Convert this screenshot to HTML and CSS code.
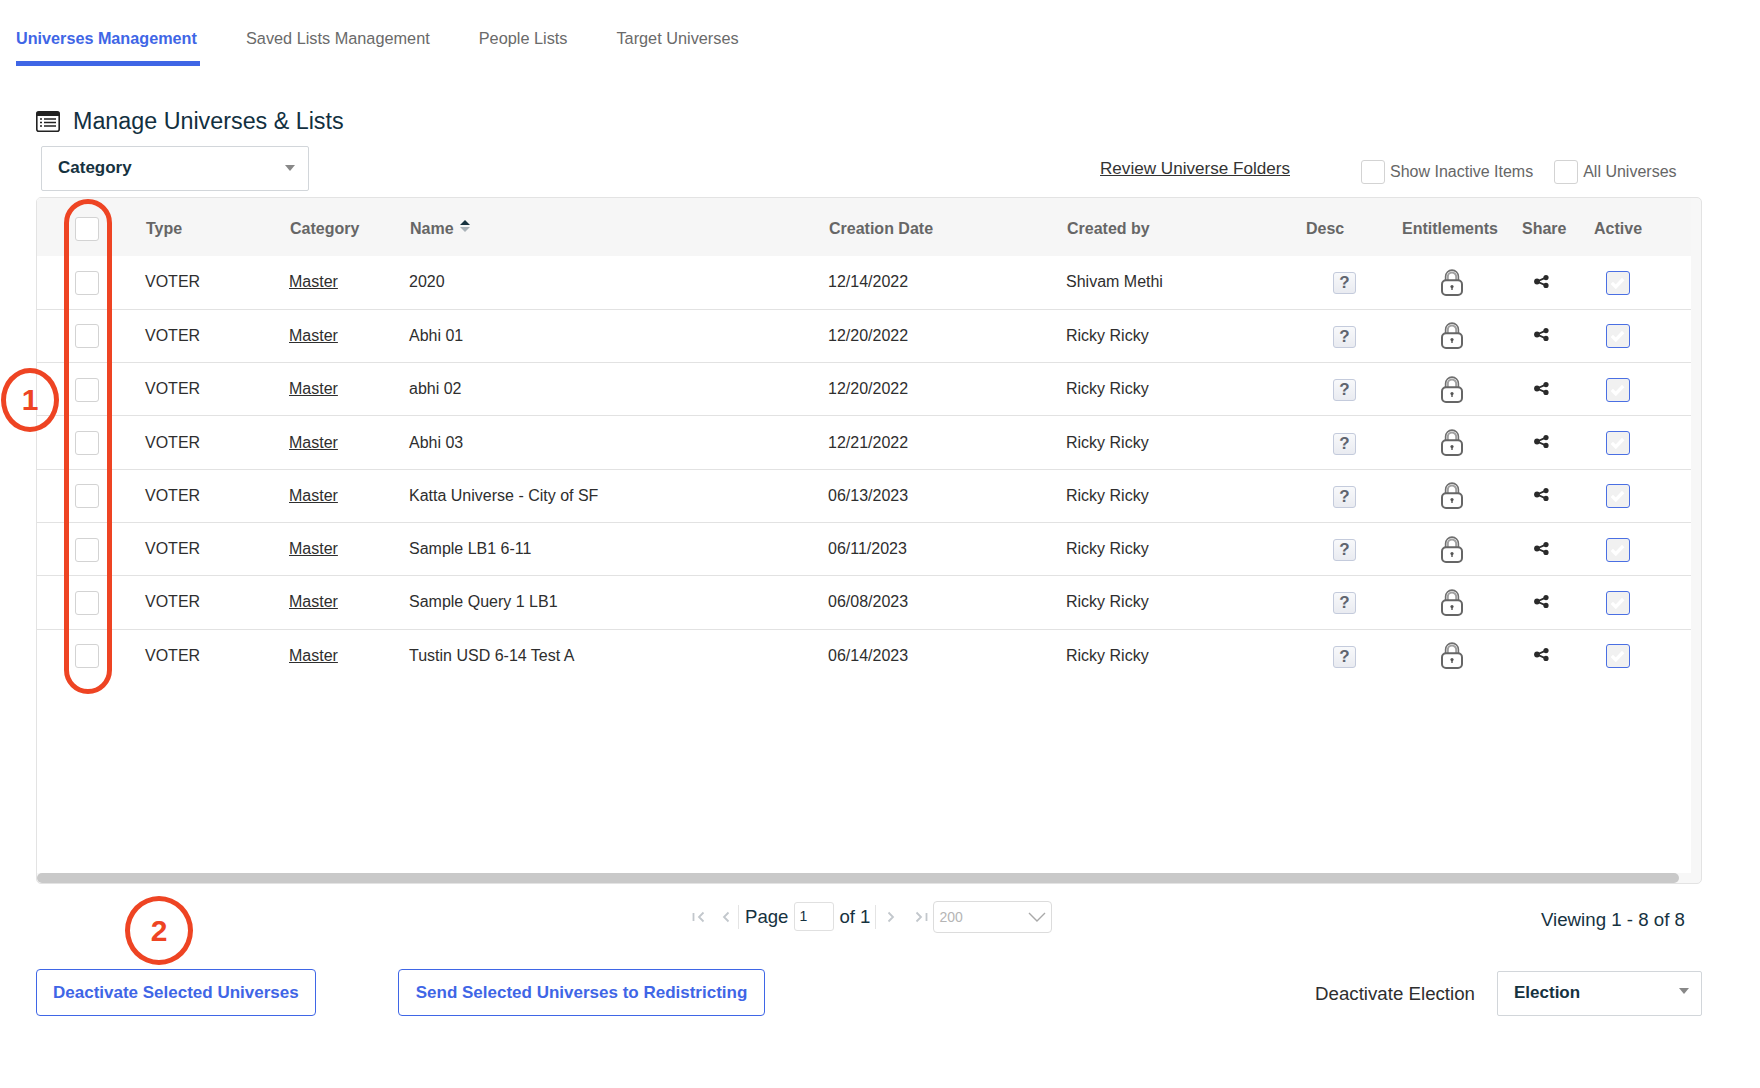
FILE: index.html
```html
<!DOCTYPE html>
<html lang="en">
<head>
  <meta charset="UTF-8" />
  <title>Universes Management</title>
  <link rel="stylesheet" href="styles.css">
</head>
<body>

  <!-- shared icons -->
  <svg class="icon-defs" width="0" height="0">
    <symbol id="lock" viewBox="0 0 22 27">
      <path d="M4.600 12V7.500a6.400 6.400 0 0 1 12.800 0V12" fill="none" stroke="#6f6f6f" stroke-width="1.600"/>
      <path d="M6.800 12V7.800a4.200 4.200 0 0 1 8.400 0V12" fill="none" stroke="#a0a0a0" stroke-width="2"/>
      <rect x="1" y="11.200" width="20" height="14.800" rx="4" fill="#fff" stroke="#666" stroke-width="2"/>
      <circle cx="11" cy="17.600" r="1.600" fill="#555"/>
      <rect x="10.300" y="18" width="1.400" height="3" fill="#555"/>
    </symbol>
    <symbol id="share" viewBox="0 0 15 13">
      <path d="M11.800 2.600 3 6.500l8.800 3.900" fill="none" stroke="#2a2a2a" stroke-width="1.700"/>
      <circle cx="3" cy="6.500" r="2.900" fill="#2a2a2a"/>
      <circle cx="12" cy="2.600" r="2.600" fill="#2a2a2a"/>
      <circle cx="12" cy="10.400" r="2.600" fill="#2a2a2a"/>
    </symbol>
    <symbol id="tick" viewBox="0 0 24 24">
      <path d="M5.500 12.500l4.500 4.500 8.500-9" fill="none" stroke="#fff" stroke-width="3.800"/>
    </symbol>
  </svg>

  <nav class="tabs">
    <a class="tab tab-active">Universes Management</a>
    <a class="tab">Saved Lists Management</a>
    <a class="tab">People Lists</a>
    <a class="tab">Target Universes</a>
  </nav>

  <main class="content">
    <div class="title-row">
      <svg class="title-icon" viewBox="0 0 24 21" width="24" height="21">
        <rect x="0.800" y="0.800" width="22.400" height="19.400" rx="2" fill="#fff" stroke="#222" stroke-width="1.600"/>
        <rect x="0.800" y="0.800" width="22.400" height="4.200" fill="#222"/>
        <path d="M4 8h2M4 11.500h2M4 15h2M8 8h12M8 11.500h12M8 15h12" stroke="#222" stroke-width="1.700"/>
      </svg>
      <h1>Manage Universes &amp; Lists</h1>
    </div>

    <div class="toolbar">
      <div class="select select-category">Category<span class="caret"></span></div>
      <a class="review-link">Review Universe Folders</a>
      <label class="check-label"><span class="checkbox"></span>Show Inactive Items</label>
      <label class="check-label"><span class="checkbox"></span>All Universes</label>
    </div>

    <div class="table-box">
      <div class="table-area">
        <table>
          <colgroup>
            <col class="c-check"><col class="c-type"><col class="c-category"><col class="c-name"><col class="c-date">
            <col class="c-by"><col class="c-desc"><col class="c-ent"><col class="c-share"><col class="c-active">
          </colgroup>
          <thead>
            <tr>
              <th><span class="checkbox row-check"></span></th>
              <th>Type</th>
              <th>Category</th>
              <th>Name <span class="sort"><i class="sort-up"></i><i class="sort-down"></i></span></th>
              <th>Creation Date</th>
              <th>Created by</th>
              <th>Desc</th>
              <th class="th-tight">Entitlements</th>
              <th class="th-tight">Share</th>
              <th class="th-tight">Active</th>
            </tr>
          </thead>
          <tbody>
            <tr>
              <td class="i-check"><span class="checkbox row-check"></span></td><td>VOTER</td><td><a class="master">Master</a></td><td>2020</td><td>12/14/2022</td><td>Shivam Methi</td>
              <td class="i-desc"><span class="help">?</span></td><td class="i-ent"><svg class="lock"><use href="#lock"/></svg></td><td class="i-share"><svg class="share"><use href="#share"/></svg></td><td class="i-active"><span class="active-box"><svg class="tick"><use href="#tick"/></svg></span></td>
            </tr>
            <tr>
              <td class="i-check"><span class="checkbox row-check"></span></td><td>VOTER</td><td><a class="master">Master</a></td><td>Abhi 01</td><td>12/20/2022</td><td>Ricky Ricky</td>
              <td class="i-desc"><span class="help">?</span></td><td class="i-ent"><svg class="lock"><use href="#lock"/></svg></td><td class="i-share"><svg class="share"><use href="#share"/></svg></td><td class="i-active"><span class="active-box"><svg class="tick"><use href="#tick"/></svg></span></td>
            </tr>
            <tr>
              <td class="i-check"><span class="checkbox row-check"></span></td><td>VOTER</td><td><a class="master">Master</a></td><td>abhi 02</td><td>12/20/2022</td><td>Ricky Ricky</td>
              <td class="i-desc"><span class="help">?</span></td><td class="i-ent"><svg class="lock"><use href="#lock"/></svg></td><td class="i-share"><svg class="share"><use href="#share"/></svg></td><td class="i-active"><span class="active-box"><svg class="tick"><use href="#tick"/></svg></span></td>
            </tr>
            <tr>
              <td class="i-check"><span class="checkbox row-check"></span></td><td>VOTER</td><td><a class="master">Master</a></td><td>Abhi 03</td><td>12/21/2022</td><td>Ricky Ricky</td>
              <td class="i-desc"><span class="help">?</span></td><td class="i-ent"><svg class="lock"><use href="#lock"/></svg></td><td class="i-share"><svg class="share"><use href="#share"/></svg></td><td class="i-active"><span class="active-box"><svg class="tick"><use href="#tick"/></svg></span></td>
            </tr>
            <tr>
              <td class="i-check"><span class="checkbox row-check"></span></td><td>VOTER</td><td><a class="master">Master</a></td><td>Katta Universe - City of SF</td><td>06/13/2023</td><td>Ricky Ricky</td>
              <td class="i-desc"><span class="help">?</span></td><td class="i-ent"><svg class="lock"><use href="#lock"/></svg></td><td class="i-share"><svg class="share"><use href="#share"/></svg></td><td class="i-active"><span class="active-box"><svg class="tick"><use href="#tick"/></svg></span></td>
            </tr>
            <tr>
              <td class="i-check"><span class="checkbox row-check"></span></td><td>VOTER</td><td><a class="master">Master</a></td><td>Sample LB1 6-11</td><td>06/11/2023</td><td>Ricky Ricky</td>
              <td class="i-desc"><span class="help">?</span></td><td class="i-ent"><svg class="lock"><use href="#lock"/></svg></td><td class="i-share"><svg class="share"><use href="#share"/></svg></td><td class="i-active"><span class="active-box"><svg class="tick"><use href="#tick"/></svg></span></td>
            </tr>
            <tr>
              <td class="i-check"><span class="checkbox row-check"></span></td><td>VOTER</td><td><a class="master">Master</a></td><td>Sample Query 1 LB1</td><td>06/08/2023</td><td>Ricky Ricky</td>
              <td class="i-desc"><span class="help">?</span></td><td class="i-ent"><svg class="lock"><use href="#lock"/></svg></td><td class="i-share"><svg class="share"><use href="#share"/></svg></td><td class="i-active"><span class="active-box"><svg class="tick"><use href="#tick"/></svg></span></td>
            </tr>
            <tr>
              <td class="i-check"><span class="checkbox row-check"></span></td><td>VOTER</td><td><a class="master">Master</a></td><td>Tustin USD 6-14 Test A</td><td>06/14/2023</td><td>Ricky Ricky</td>
              <td class="i-desc"><span class="help">?</span></td><td class="i-ent"><svg class="lock"><use href="#lock"/></svg></td><td class="i-share"><svg class="share"><use href="#share"/></svg></td><td class="i-active"><span class="active-box"><svg class="tick"><use href="#tick"/></svg></span></td>
            </tr>
          </tbody>
        </table>
      </div>
      <div class="scroll-track"><div class="scroll-thumb"></div></div>
    </div>

    <div class="pager-row">
      <div class="pager">
        <svg class="pg-icon" viewBox="0 0 14 12" width="14" height="12"><path d="M1.500 2v8M11.500 1.500 7 6l4.500 4.500" fill="none" stroke="#c2c7cc" stroke-width="1.800"/></svg>
        <svg class="pg-icon pg-prev" viewBox="0 0 10 12" width="10" height="12"><path d="M7.500 1.500 3 6l4.500 4.500" fill="none" stroke="#c2c7cc" stroke-width="1.800"/></svg>
        <span class="pg-sep"></span>
        <span class="pg-text">Page</span>
        <span class="pg-input">1</span>
        <span class="pg-text">of 1</span>
        <span class="pg-sep"></span>
        <svg class="pg-icon pg-next" viewBox="0 0 10 12" width="10" height="12"><path d="M2.500 1.500 7 6l-4.500 4.500" fill="none" stroke="#c2c7cc" stroke-width="1.800"/></svg>
        <svg class="pg-icon pg-last" viewBox="0 0 14 12" width="14" height="12"><path d="M2.500 1.500 7 6l-4.500 4.500M12.500 2v8" fill="none" stroke="#c2c7cc" stroke-width="1.800"/></svg>
        <div class="pg-size">200
          <svg viewBox="0 0 18 10" width="18" height="10"><path d="M1 1l8 8 8-8" fill="none" stroke="#a9a9a9" stroke-width="1.400"/></svg>
        </div>
      </div>
      <div class="viewing">Viewing 1 - 8 of 8</div>
    </div>

    <div class="actions">
      <button class="action-btn">Deactivate Selected Universes</button>
      <button class="action-btn">Send Selected Universes to Redistricting</button>
      <div class="deactivate-group">
        <span class="deactivate-label">Deactivate Election</span>
        <div class="select select-election">Election<span class="caret"></span></div>
      </div>
    </div>
  </main>

  <!-- callouts drawn over the screenshot -->
  <div class="mark-column"></div>
  <div class="mark-circle mark-one">1</div>
  <div class="mark-circle mark-two">2</div>

</body>
</html>
```

FILE: styles.css
```css
* {
  box-sizing: border-box;
}

body {
  margin: 0;
  height: 1088px;
  overflow: hidden;
  position: relative;
  background-color: #fff;
  font-family: "Liberation Sans", Arial, sans-serif;
  font-size: 16px;
  color: #2e2e2e;
}

.icon-defs {
  position: absolute;
}

/* tabs */
.tabs {
  display: flex;
  gap: 49px;
  padding-left: 16px;
  height: 66px;
}

.tab {
  padding-top: 28px;
  color: #6a6a6a;
  font-size: 16.3px;
  line-height: 20px;
}

.tab-active {
  width: 184px;
  margin-right: -3px;
  border-bottom: 5px solid #3f66e6;
  color: #3f66e6;
  font-size: 16.2px;
  font-weight: bold;
  white-space: nowrap;
}

/* page body */
.content {
  padding: 0 58px 0 36px;
}

.title-row {
  display: flex;
  align-items: center;
  gap: 13px;
  margin-top: 39px;
  height: 32px;
}

.title-row h1 {
  margin: 0;
  font-size: 23.3px;
  font-weight: normal;
  color: #12303f;
}

.toolbar {
  display: flex;
  align-items: center;
  height: 45px;
  margin-top: 9px;
  padding-left: 5px;
}

.select {
  position: relative;
  display: flex;
  align-items: center;
  border: 1px solid #d2d6da;
  border-radius: 2px;
  font-size: 17px;
  font-weight: bold;
  color: #16323f;
}

.select-category {
  width: 268px;
  height: 45px;
  padding: 0 0 1px 16px;
}

.caret {
  position: absolute;
  right: 13px;
  top: 18px;
  border-left: 5px solid transparent;
  border-right: 5px solid transparent;
  border-top: 6px solid #888;
}

.review-link {
  margin-left: 791px;
  color: #333;
  font-size: 17.1px;
  text-decoration: underline;
}

.checkbox {
  display: block;
  width: 24px;
  height: 24px;
  background-color: #fff;
  border: 1px solid #d3d3d3;
  border-radius: 3px;
}

.check-label {
  display: flex;
  align-items: center;
  gap: 5px;
  margin-left: 71px;
  margin-top: 7px;
  color: #666;
}

.check-label + .check-label {
  margin-left: 21px;
}

/* table */
.table-box {
  margin-top: 6px;
  height: 687px;
  border: 1px solid #e3e3e3;
  border-radius: 5px;
  background-color: #f7f7f7;
  display: flex;
  flex-direction: column;
  overflow: hidden;
}

.table-area {
  flex: 1;
  width: 1654px;
  background-color: #fff;
}

table {
  width: 1654px;
  table-layout: fixed;
  border-collapse: collapse;
}

.c-check { width: 108px; }
.c-type { width: 144px; }
.c-category { width: 120px; }
.c-name { width: 419px; }
.c-date { width: 238px; }
.c-by { width: 239px; }
.c-desc { width: 97px; }
.c-ent { width: 120px; }
.c-share { width: 72px; }
.c-active { width: 97px; }

thead tr {
  height: 58px;
  background-color: #f6f6f6;
}

th {
  padding: 3px 0 0 1px;
  text-align: left;
  color: #666;
  font-weight: bold;
}

th.th-tight {
  padding-left: 0;
}

tbody tr {
  height: 53.3px;
  border-bottom: 1px solid #e2e2e2;
}

tbody tr:last-child {
  border-bottom: none;
}

td {
  padding: 0;
}

.i-check {
  padding-top: 1px;
}

.row-check {
  margin-left: 38px;
}

th .row-check {
  margin-left: 37px;
}

.master {
  color: #2e2e2e;
  text-decoration: underline;
}

.sort {
  display: inline-block;
  vertical-align: 2px;
  width: 10px;
  margin-left: 2px;
}

.sort i {
  display: block;
  border-left: 5px solid transparent;
  border-right: 5px solid transparent;
}

.sort-up {
  border-bottom: 5px solid #16323f;
  margin-bottom: 2px;
}

.sort-down {
  border-top: 5px solid #a9b2b8;
}

.i-desc { padding: 2px 0 0 28px; }
.i-ent { padding-left: 39px; }
.i-share { padding-left: 12px; }
.i-active { padding: 1px 0 0 12px; }

.help {
  display: block;
  width: 23px;
  height: 22px;
  border: 1px solid #c4cbdc;
  border-radius: 3px;
  background: linear-gradient(#f8f9fb, #e9ebf1);
  color: #60656f;
  font-size: 17px;
  font-weight: bold;
  line-height: 20px;
  text-align: center;
}

.lock {
  display: block;
  width: 22px;
  height: 27px;
}

.share {
  display: block;
  width: 15px;
  height: 13px;
  margin-bottom: 2px;
}

.active-box {
  display: block;
  width: 24px;
  height: 24px;
  background-color: #f1f1f1;
  border: 1.5px solid #4a6fe3;
  border-radius: 3px;
}

.tick {
  display: block;
  width: 21px;
  height: 21px;
}

.scroll-track {
  height: 10px;
  flex: none;
}

.scroll-thumb {
  width: 1642px;
  height: 10px;
  background-color: #c9c9c9;
  border-radius: 5px;
}

/* pager */
.pager-row {
  display: flex;
  align-items: center;
  height: 65px;
  padding-left: 656px;
  padding-right: 17px;
}

.pager {
  display: flex;
  align-items: center;
  color: #16323f;
  font-size: 18.6px;
}

.pg-prev { margin-left: 15px; }
.pg-next { margin-left: 5px; }
.pg-last { margin-left: 18px; }

.pg-sep {
  width: 1px;
  height: 24px;
  margin: 0 5px;
  background-color: #e4e4e4;
}

.pg-sep:first-of-type {
  margin-left: 7px;
  margin-right: 6px;
}

.pg-input {
  display: block;
  width: 40px;
  height: 29px;
  margin: 0 5px 0 6px;
  padding-left: 4px;
  border: 1px solid #e0e0e0;
  border-radius: 3px;
  font-size: 14px;
  line-height: 27px;
}

.pg-size {
  display: flex;
  align-items: center;
  justify-content: space-between;
  width: 119px;
  height: 32px;
  margin-left: 5px;
  padding: 0 5px;
  border: 1px solid #dcdcdc;
  border-radius: 4px;
  color: #b5b5b5;
  font-size: 14px;
}

.viewing {
  margin-left: auto;
  margin-top: 6px;
  color: #16323f;
  font-size: 18.7px;
}

/* bottom actions */
.actions {
  display: flex;
  align-items: center;
  gap: 82px;
  margin-top: 20px;
}

.action-btn {
  height: 47px;
  padding: 0 16px;
  background-color: #fff;
  border: 1px solid #3f66e6;
  border-radius: 4px;
  color: #3f66e6;
  font-family: inherit;
  font-size: 17px;
  font-weight: bold;
}

.action-btn + .action-btn {
  padding: 0 17px;
}

.deactivate-group {
  display: flex;
  align-items: center;
  gap: 22px;
  margin-left: auto;
  margin-top: 2px;
}

.deactivate-label {
  font-size: 18.7px;
  color: #2e2e2e;
}

.select-election {
  width: 205px;
  height: 45px;
  padding: 0 0 1px 16px;
}

.select-election .caret {
  right: 12px;
  top: 16px;
}

/* red callouts */
.mark-column {
  position: absolute;
  left: 64px;
  top: 199px;
  width: 48px;
  height: 495px;
  border: 5px solid #ee4423;
  border-radius: 24px;
}

.mark-circle {
  position: absolute;
  display: flex;
  align-items: center;
  justify-content: center;
  border: 5px solid #ee4423;
  border-radius: 50%;
  color: #ee4423;
  font-size: 30px;
  font-weight: bold;
}

.mark-one {
  left: 1px;
  top: 368px;
  width: 58px;
  height: 64px;
}

.mark-two {
  left: 125px;
  top: 896px;
  width: 68px;
  height: 69px;
}
```
